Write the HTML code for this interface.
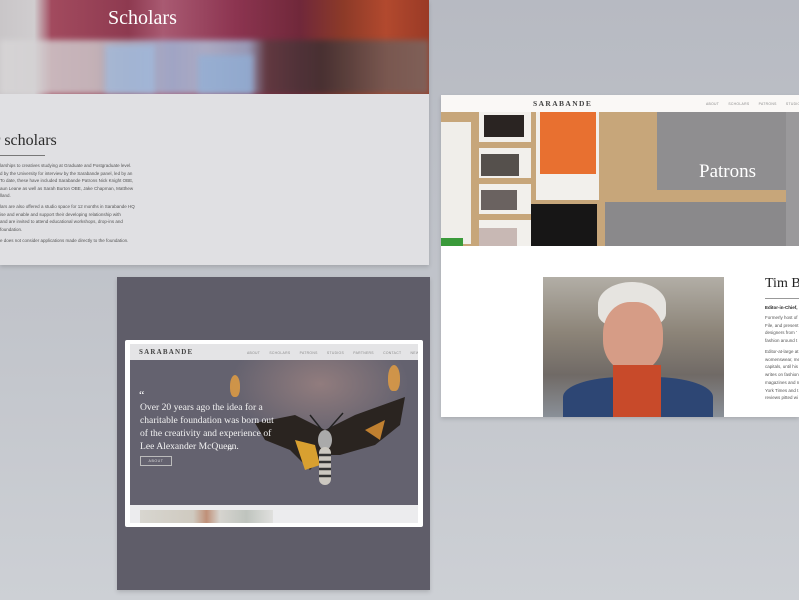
<!DOCTYPE html>
<html><head><meta charset="utf-8"><style>
*{margin:0;padding:0;box-sizing:border-box}
body{width:799px;height:600px;overflow:hidden;position:relative;background:linear-gradient(180deg,#b7bac2 0%,#c3c6cc 60%,#cdd0d5 100%);font-family:"Liberation Sans",sans-serif}
.a{position:absolute;white-space:nowrap}
.serif{font-family:"Liberation Serif",serif}
.sm{font-size:4.5px;color:#555;line-height:7.6px;white-space:nowrap}
.nav{font-size:3.4px;color:#888;letter-spacing:.3px;white-space:nowrap}
</style></head><body>

<!-- Card 1 -->
<div class="a" style="left:0;top:0;width:429px;height:265px;background:#e0e0e3;box-shadow:0 2px 4px rgba(0,0,0,.15)"></div>
<div class="a" style="left:0;top:0;width:429px;height:94px;overflow:hidden;background:linear-gradient(90deg,#c9c6c8 0%,#d0cdcf 8%,#a24a5e 12%,#8e3a50 30%,#a95a72 38%,#8c3450 55%,#70283a 70%,#8c3a28 80%,#b2492e 90%,#9a3a26 100%)">
 <div class="a" style="left:0;top:40px;width:429px;height:54px;background:linear-gradient(90deg,#d9d7d8 0%,#cfcdcf 22%,#b9c0cc 28%,#9fb8da 40%,#b0c4dc 48%,#9cb2d0 58%,#5b3b40 62%,#3c3032 75%,#6c5b58 90%,#7a6a65 100%);opacity:.8;filter:blur(3px)"></div>
 <div class="a" style="left:105px;top:45px;width:50px;height:49px;background:#9fbce0;opacity:.7;filter:blur(3px)"></div>
 <div class="a" style="left:198px;top:55px;width:55px;height:39px;background:#8fb0d8;opacity:.7;filter:blur(3px)"></div>
 <div class="a serif" style="left:108px;top:7px;font-size:20px;color:#fff">Scholars</div>
</div>
<div class="a serif" style="left:-5px;top:132px;font-size:16px;color:#2a2a2a">r scholars</div>
<div class="a" style="left:0;top:155px;width:45px;height:1px;background:#777"></div>
<div class="a sm" style="left:0;top:162px">larships to creatives studying at Graduate and Postgraduate level.<br>d by the University for interview by the Sarabande panel, led by an<br>To date, these have included Sarabande Patrons Nick Knight OBE,<br>aun Leane as well as Sarah Burton OBE, Jake Chapman, Matthew<br>lland.</div>
<div class="a sm" style="left:0;top:203px">lars are also offered a studio space for 12 months in Sarabande HQ<br>ise and enable and support their developing relationship with<br>and are invited to attend educational workshops, drop-ins and<br>foundation.</div>
<div class="a sm" style="left:0;top:237px">e does not consider applications made directly to the foundation.</div>

<!-- Card 2 -->
<div class="a" style="left:117px;top:277px;width:313px;height:313px;background:#5f5d69;box-shadow:0 2px 4px rgba(0,0,0,.15)"></div>
<div class="a" style="left:125px;top:340px;width:298px;height:187px;background:#fff;border-radius:2px"></div>
<div class="a" style="left:130px;top:344px;width:288px;height:16px;background:#e4e4e6;overflow:hidden">
 <div class="a serif" style="left:9px;top:4px;font-size:7px;letter-spacing:1.2px;color:#444;font-weight:bold">SARABANDE</div>
 <div class="a nav" style="left:117px;top:7px;word-spacing:8px">ABOUT SCHOLARS PATRONS STUDIOS PARTNERS CONTACT NEWS</div>
</div>
<div class="a" style="left:130px;top:360px;width:288px;height:145px;background:#64626f;overflow:hidden">
 <div class="a" style="left:100px;top:0;width:180px;height:80px;background:radial-gradient(ellipse at 50% 30%,rgba(190,150,140,.5),rgba(100,98,111,0) 70%)"></div>
 <div class="a" style="left:100px;top:15px;width:10px;height:22px;background:#e8a040;border-radius:50% 50% 40% 40%;opacity:.8"></div>
 <div class="a" style="left:258px;top:5px;width:12px;height:26px;background:#e8a040;border-radius:50% 50% 40% 40%;opacity:.8"></div>
 <svg class="a" style="left:105px;top:25px" width="180" height="110" viewBox="0 0 180 110">
  <path d="M90 45 L60 30 L20 38 L30 55 L55 65 L75 85 L88 70 Z" fill="#2a2420"/>
  <path d="M90 45 L120 30 L170 12 L165 40 L140 60 L105 70 L92 70 Z" fill="#2a2420"/>
  <path d="M60 55 L80 60 L85 80 L70 85 Z" fill="#d8a030"/>
  <path d="M130 45 L150 35 L145 55 Z" fill="#c08030"/>
  <ellipse cx="90" cy="55" rx="7" ry="10" fill="#aaa"/>
  <rect x="84" y="62" width="12" height="38" rx="6" fill="#ccc8c0"/>
  <path d="M84 70h12M84 77h12M84 84h12M84 91h12" stroke="#333" stroke-width="2.5"/>
  <path d="M87 45 L75 30 M93 45 L108 28" stroke="#222" stroke-width="1.5"/>
 </svg>
 <div class="a serif" style="left:9px;top:28px;font-size:12px;color:#fff">“</div>
 <div class="a serif" style="left:10px;top:41px;font-size:9.6px;line-height:13px;color:#f2f2f2">Over 20 years ago the idea for a<br>charitable foundation was born out<br>of the creativity and experience of<br>Lee Alexander McQueen.</div>
 <div class="a serif" style="left:97px;top:84px;font-size:12px;color:#fff">”</div>
 <div class="a" style="left:10px;top:96px;width:32px;height:10px;border:1px solid #bbb;font-size:3.6px;color:#ddd;text-align:center;line-height:8px;letter-spacing:.5px">ABOUT</div>
</div>
<div class="a" style="left:130px;top:505px;width:288px;height:18px;background:#ececee"></div>
<div class="a" style="left:140px;top:510px;width:133px;height:13px;background:linear-gradient(90deg,#d8d6d0,#cfcac0 40%,#c09078 50%,#d6d4cf 60%,#bfc4be 80%,#e0e0de)"></div>

<!-- Card 3 -->
<div class="a" style="left:441px;top:95px;width:358px;height:322px;background:#fff;box-shadow:0 2px 4px rgba(0,0,0,.15);overflow:hidden">
 <div class="a" style="left:0;top:17px;width:358px;height:134px;background:#c7a67a;overflow:hidden">
  <div class="a" style="left:0;top:10px;width:30px;height:122px;background:#f0eeea"></div>
  <div class="a" style="left:0;top:126px;width:22px;height:8px;background:#3a9a3a"></div>
  <div class="a" style="left:38px;top:0;width:52px;height:134px;background:repeating-linear-gradient(180deg,#f2f0ec 0 30px,#c7a67a 30px 36px)"></div>
  <div class="a" style="left:43px;top:3px;width:40px;height:22px;background:#2a2422"></div>
  <div class="a" style="left:40px;top:42px;width:38px;height:22px;background:#55504c"></div>
  <div class="a" style="left:40px;top:78px;width:36px;height:20px;background:#6a6260"></div>
  <div class="a" style="left:38px;top:116px;width:38px;height:18px;background:#c8b8b4"></div>
  <div class="a" style="left:95px;top:0;width:63px;height:88px;background:#f2f0ec"></div>
  <div class="a" style="left:99px;top:0;width:56px;height:62px;background:#e87030"></div>
  <div class="a" style="left:90px;top:92px;width:66px;height:42px;background:#171616"></div>
  <div class="a" style="left:216px;top:0;width:130px;height:78px;background:#8f8e90"></div>
  <div class="a" style="left:164px;top:90px;width:194px;height:44px;background:#8a898b"></div>
  <div class="a" style="left:345px;top:0;width:13px;height:134px;background:#9a999b"></div>
  <div class="a serif" style="left:258px;top:49px;font-size:19px;color:#fff">Patrons</div>
 </div>
 <div class="a" style="left:0;top:0;width:358px;height:17px;background:rgba(250,248,246,.95)"></div>
 <div class="a serif" style="left:92px;top:4px;font-size:7.5px;letter-spacing:1.4px;color:#444;font-weight:bold">SARABANDE</div>
 <div class="a nav" style="left:265px;top:7px;word-spacing:8px">ABOUT SCHOLARS PATRONS STUDIOS</div>
 <div class="a" style="left:102px;top:182px;width:181px;height:140px;background:linear-gradient(180deg,#b2aea6 0%,#8c8478 40%,#706a66 70%,#8a9098 100%);overflow:hidden">
  <div class="a" style="left:55px;top:5px;width:68px;height:45px;background:#e6e4e0;border-radius:50% 50% 30% 30%"></div>
  <div class="a" style="left:60px;top:25px;width:60px;height:70px;background:#d69c86;border-radius:45%"></div>
  <div class="a" style="left:20px;top:100px;width:150px;height:50px;background:#2d4674;border-radius:40% 40% 0 0"></div>
  <div class="a" style="left:70px;top:88px;width:48px;height:52px;background:#c84a2a"></div>
 </div>
 <div class="a serif" style="left:324px;top:181px;font-size:14px;color:#222">Tim B</div>
 <div class="a" style="left:324px;top:203px;width:34px;height:1px;background:#999"></div>
 <div class="a" style="left:324px;top:210px;font-size:4.5px;color:#222;font-weight:bold">Editor-in-Chief,</div>
 <div class="a sm" style="left:324px;top:219px;line-height:7.7px">Formerly host of<br>File, and present<br>designers from '<br>fashion around t</div>
 <div class="a sm" style="left:324px;top:253px;line-height:7.7px">Editor-at-large at<br>womenswear, me<br>capitals, until his<br>writes on fashion<br>magazines and n<br>York Times and t<br>reviews pitted wi</div>
</div>
</body></html>
